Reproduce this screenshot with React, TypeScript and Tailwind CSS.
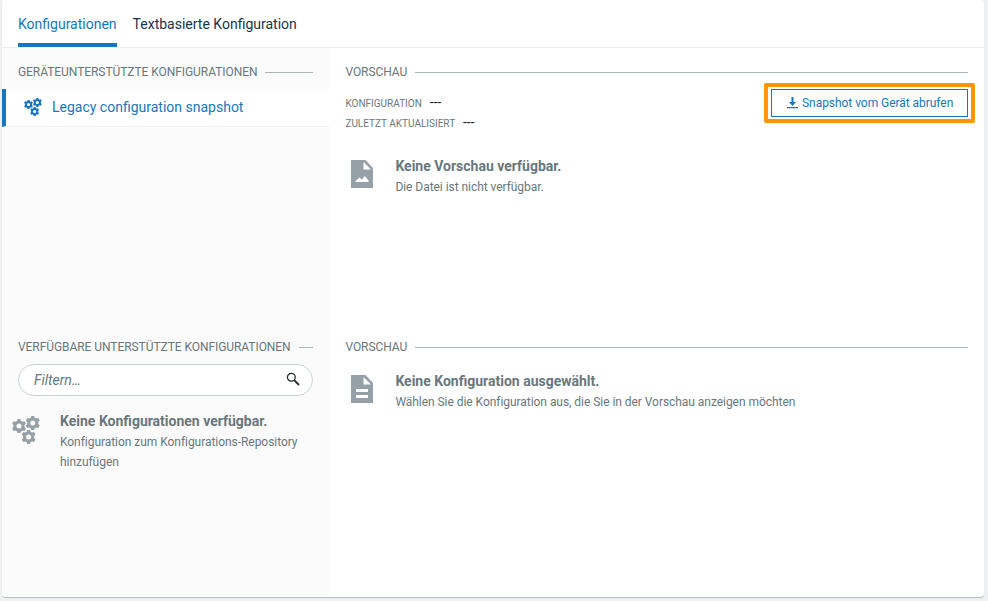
import React from "react";

type IconProps = { className?: string };

const GEAR =
  "M-1.5-7h3l.4 1.7 1.6.9 1.9-.5 1.5 2.5-1.4 1.4v2l1.4 1.4-1.5 2.5-1.9-.5-1.6.9-.4 1.7h-3l-.4-1.7-1.6-.9-1.9.5-1.5-2.5 1.4-1.4v-2l-1.4-1.4 1.5-2.5 1.9.5 1.6-.9zM0-2.5a2.5 2.5 0 1 0 0 5a2.5 2.5 0 1 0 0-5z";

function Gears({ className }: IconProps) {
  return (
    <svg viewBox="0 0 28 28" className={className} fill="currentColor" fillRule="evenodd">
      <path d={GEAR} transform="translate(7 10.1)" />
      <path d={GEAR} transform="translate(20.8 7)" />
      <path d={GEAR} transform="translate(16.6 21)" />
    </svg>
  );
}

function ImageFile({ className }: IconProps) {
  return (
    <svg viewBox="0 0 22 28" className={className} fill="currentColor" fillRule="evenodd">
      <path d="M0 0H14.5L22 8V28H0zM12.5 2V9.5H20zM4.5 22H17.5V20.5L14 16L11 19.5L8.5 17.5L4.5 21z" />
    </svg>
  );
}

function TextFile({ className }: IconProps) {
  return (
    <svg viewBox="0 0 22 28" className={className} fill="currentColor" fillRule="evenodd">
      <path d="M0 0H14.5L22 8V28H0zM12.5 2V9.5H20zM5 14H17V17H5zM5 20H17V23H5z" />
    </svg>
  );
}

function Heading({ children }: { children: React.ReactNode }) {
  return (
    <h2 className="flex h-4 items-center gap-2 whitespace-nowrap text-[12px] leading-4 text-[#68777d]">
      <span className="tracking-[-0.06px]">{children}</span>
      <span className="mt-px h-px flex-1 bg-[#aeb5b9]" />
    </h2>
  );
}

function Field({ label }: { label: string }) {
  return (
    <div className="flex h-5 items-center gap-2">
      <span className="text-[10px] text-[#68777d]">{label}</span>
      <span className="-mt-[2px] text-[14px] leading-4 tracking-[-0.1px] text-[#1d2429]">---</span>
    </div>
  );
}

function Empty({ title, children }: { title: string; children: React.ReactNode }) {
  return (
    <div className="text-[#68777d]">
      <p className="text-[14px] font-bold leading-5">{title}</p>
      <p className="pt-px text-[12px] leading-5 tracking-[-0.045px]">{children}</p>
    </div>
  );
}

export default function App() {
  return (
    <div className="h-[601px] w-[988px] overflow-hidden bg-[#f0f1f3] pl-[2px] font-['Roboto',sans-serif]">
      <main className="flex h-[597px] w-[982px] flex-col rounded-sm bg-white shadow-[0_1px_1px_#b8bcc0]">
        <nav className="flex h-12 gap-4 border-b border-[#eeeff1] pl-4 text-[14px] text-[#17344e]">
          <button className="h-[47px] border-b-4 border-[#1776bf] pt-[6px] text-[#1776bf]">Konfigurationen</button>
          <button className="h-[47px] border-b-4 border-transparent pt-[6px]">Textbasierte Konfiguration</button>
        </nav>
        <div className="flex min-h-0 flex-1">
          <aside className="flex w-[327px] flex-col rounded-bl-sm bg-[#fbfbfb]">
            <section className="h-[275px]">
              <div className="px-4 pt-4">
                <Heading>GERÄTEUNTERSTÜTZTE KONFIGURATIONEN</Heading>
              </div>
              <div className="mt-[9px] flex h-[38px] items-center border-b border-l-4 border-b-[#f0f1f2] border-l-[#1776bf] bg-white pl-[18px] text-[#1776bf]">
                <Gears className="mb-[2px] h-[18px] w-[18px]" />
                <span className="ml-[10px] text-[14px]">Legacy configuration snapshot</span>
              </div>
            </section>
            <section>
              <div className="px-4 pt-4">
                <Heading>VERFÜGBARE UNTERSTÜTZTE KONFIGURATIONEN</Heading>
                <label className="mt-[9px] flex h-8 items-center rounded-full border border-[#cbd2d6] bg-white pl-[15px] pr-3">
                  <input
                    className="min-w-0 flex-1 text-[14px] italic outline-none placeholder:text-[#68777d] placeholder:opacity-100"
                    placeholder="Filtern…"
                  />
                  <svg viewBox="0 0 14 14" className="mb-[2px] h-[14px] w-[14px]" fill="none" stroke="#252a2e">
                    <circle cx="5.3" cy="5.3" r="3.9" strokeWidth="1.3" />
                    <path d="M8.2 8.2L13 13" strokeWidth="1.9" />
                  </svg>
                </label>
              </div>
              <div className="flex pl-[10px] pt-[15px]">
                <Gears className="mt-[5px] h-7 w-7 text-[#96a1a7]" />
                <div className="ml-5 w-[250px]">
                  <Empty title="Keine Konfigurationen verfügbar.">
                    Konfiguration zum Konfigurations-Repository hinzufügen
                  </Empty>
                </div>
              </div>
            </section>
          </aside>
          <div className="flex-1 pl-[16.4px] pr-4 pt-4">
            <section className="h-[275px]">
              <Heading>VORSCHAU</Heading>
              <div className="mt-[3px] flex justify-between">
                <div className="pt-[10px]">
                  <Field label="KONFIGURATION" />
                  <Field label="ZULETZT AKTUALISIERT" />
                </div>
                <div className="-mr-[7px] h-10 rounded-[2px] border-4 border-[#ff9500] p-[2px] pl-[3px] pr-[3px]">
                  <button className="flex h-7 w-[197px] items-center border border-[#1776bf] pl-[15px] text-[12px] text-[#1776bf]">
                    <svg viewBox="0 0 11 12" className="h-3 w-[11px]" fill="currentColor">
                      <path d="M4.5 0h2v5H9L5.5 9 2 5h2.5zM0 10h11v1.2H0z" />
                    </svg>
                    <span className="ml-1 whitespace-nowrap tracking-[-0.045px]">Snapshot vom Gerät abrufen</span>
                  </button>
                </div>
              </div>
              <div className="mt-[23px] flex pl-[5.6px]">
                <ImageFile className="mt-[4px] h-7 w-[22px] text-[#96a1a7]" />
                <div className="ml-[22.4px]">
                  <Empty title="Keine Vorschau verfügbar.">Die Datei ist nicht verfügbar.</Empty>
                </div>
              </div>
            </section>
            <section>
              <Heading>VORSCHAU</Heading>
              <div className="mt-4 flex pl-[5.6px]">
                <TextFile className="mt-[4px] h-7 w-[22px] text-[#96a1a7]" />
                <div className="ml-[22.4px]">
                  <Empty title="Keine Konfiguration ausgewählt.">
                    Wählen Sie die Konfiguration aus, die Sie in der Vorschau anzeigen möchten
                  </Empty>
                </div>
              </div>
            </section>
          </div>
        </div>
      </main>
    </div>
  );
}
